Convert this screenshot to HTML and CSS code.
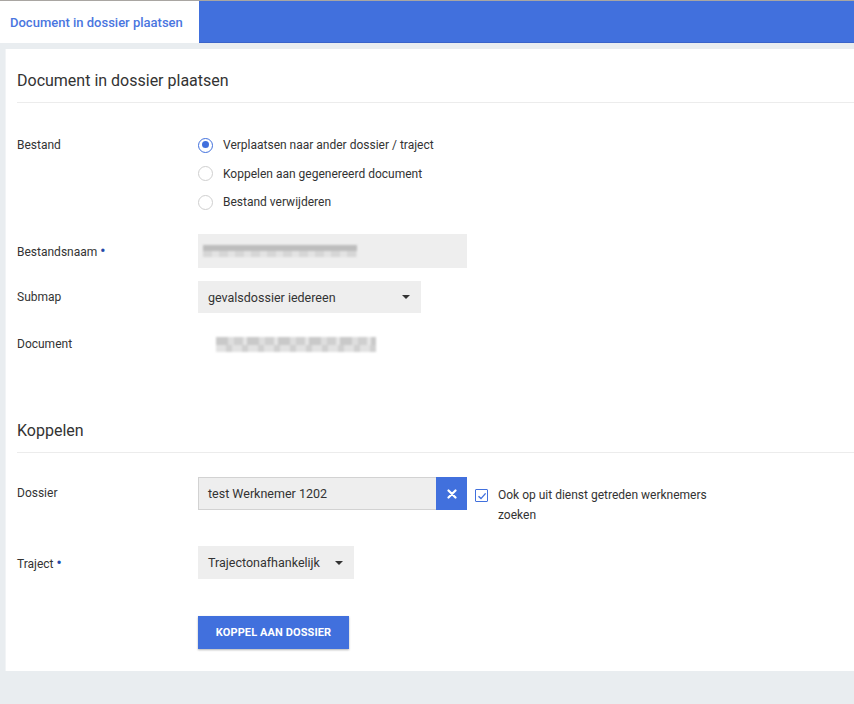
FILE: index.html
```html
<!DOCTYPE html>
<html lang="nl">
<head>
<meta charset="utf-8">
<title>Document in dossier plaatsen</title>
<link rel="stylesheet" href="styles.css">
</head>
<body>
<div class="topline"></div>
<nav class="tabbar">
  <div class="tab active">Document in dossier plaatsen</div>
  <div class="tabfill"></div>
</nav>
<main class="page">
  <section class="card">
    <h2 class="section-title">Document in dossier plaatsen</h2>

    <div class="row row-radios">
      <div class="label">Bestand</div>
      <div class="radios">
        <label class="radio"><span class="dot checked"></span><span>Verplaatsen naar ander dossier / traject</span></label>
        <label class="radio"><span class="dot"></span><span>Koppelen aan gegenereerd document</span></label>
        <label class="radio"><span class="dot"></span><span>Bestand verwijderen</span></label>
      </div>
    </div>

    <div class="row row-name">
      <div class="label">Bestandsnaam <span class="req">•</span></div>
      <div class="input input-name"><span class="blur blur-name" aria-hidden="true"></span></div>
    </div>

    <div class="row row-submap">
      <div class="label">Submap</div>
      <div class="select select-submap"><span>gevalsdossier iedereen</span><span class="caret"></span></div>
    </div>

    <div class="row row-doc">
      <div class="label">Document</div>
      <div class="docval"><span class="blur blur-doc" aria-hidden="true"></span></div>
    </div>

    <h2 class="section-title koppelen">Koppelen</h2>

    <div class="row row-dossier">
      <div class="label label-dossier">Dossier</div>
      <div class="dossier-input">test Werknemer 1202</div>
      <button class="clear" type="button">
        <svg width="10" height="10" viewBox="0 0 10 10"><path d="M1.5 1.5 L8.5 8.5 M8.5 1.5 L1.5 8.5" stroke="#fff" stroke-width="2.2" stroke-linecap="round"/></svg>
      </button>
      <label class="check">
        <span class="box"><svg width="10" height="10" viewBox="0 0 10 10"><path d="M1.5 5.2 L4 7.6 L8.6 2.4" fill="none" stroke="#4170dd" stroke-width="1.4"/></svg></span>
        <span class="check-text">Ook op uit dienst getreden werknemers zoeken</span>
      </label>
    </div>

    <div class="row row-traject">
      <div class="label">Traject <span class="req">•</span></div>
      <div class="select select-traject"><span>Trajectonafhankelijk</span><span class="caret"></span></div>
    </div>

    <div class="row row-btn">
      <div class="label"></div>
      <button class="primary" type="button">KOPPEL AAN DOSSIER</button>
    </div>
  </section>
</main>
</body>
</html>
```

FILE: styles.css
```css
* { box-sizing: border-box; }
html, body { margin: 0; padding: 0; }
body {
  width: 854px;
  height: 704px;
  overflow: hidden;
  background: #e9edf0;
  font-family: Roboto, "Liberation Sans", Arial, sans-serif;
  color: #333;
}
.topline { height: 1px; background: #a9a6a2; }
.tabbar { display: flex; height: 42px; background: #fff; }
.tab {
  width: 199px;
  padding-left: 10px;
  display: flex;
  align-items: center;
  font-size: 13px;
  font-weight: 500;
  color: #4a76e0;
  background: #fff;
}
.tabfill { flex: 1; background: #4170dd; border-bottom: 1px solid #3a63c9; }
.page { padding: 6px 0 0 5px; }
.card {
  background: #fff;
  padding: 0 0 22px 11px;
  border-left: 1px solid #f2f4f6;
}
.section-title {
  margin: 0;
  padding: 22px 0 11px;
  font-size: 16px;
  line-height: 20px;
  font-weight: 400;
  color: #333;
  border-bottom: 1px solid #ececec;
}
.section-title.koppelen { margin-top: 40px; }
.row { display: flex; align-items: center; }
.label {
  width: 181px;
  flex: none;
  font-size: 12px;
  color: #333;
}
.req { color: #2348a8; font-size: 14px; font-weight: 700; }
.row-radios { margin-top: 28px; align-items: flex-start; }
.row-radios .label { line-height: 28px; }
.radios { display: flex; flex-direction: column; }
.radio {
  display: flex;
  align-items: center;
  height: 28.5px;
  font-size: 12px;
  color: #333;
}
.dot {
  width: 15px;
  height: 15px;
  border-radius: 50%;
  border: 1.5px solid #cfcfcf;
  margin-right: 10px;
  flex: none;
  position: relative;
}
.dot.checked { border-color: #4170dd; }
.dot.checked::after {
  content: "";
  position: absolute;
  left: 2.5px; top: 2.5px;
  width: 7px; height: 7px;
  border-radius: 50%;
  background: #4170dd;
}
.row-name { margin-top: 17.5px; }
.input {
  width: 269px;
  height: 34px;
  background: #eeeeee;
  display: flex;
  align-items: center;
  padding-left: 5px;
}
.blur { display: block; filter: blur(1.2px); }
.blur-name {
  width: 154px;
  height: 12px;
  background:
    linear-gradient(#bdbdbd, #bdbdbd) 0 0 / 100% 6px no-repeat,
    repeating-linear-gradient(90deg, #d6d6d6 0 9px, #e3e3e3 9px 16px) 0 6px / 100% 6px no-repeat;
}
.row-submap { margin-top: 13px; }
.select {
  height: 32px;
  background: #eeeeee;
  display: flex;
  align-items: center;
  justify-content: space-between;
  padding: 0 11px 0 10px;
  font-size: 12.5px;
  color: #333;
}
.select-submap { width: 223px; }
.select-traject { width: 156px; height: 33px; }
.caret {
  width: 0; height: 0;
  border-left: 4px solid transparent;
  border-right: 4px solid transparent;
  border-top: 4px solid #333;
}
.row-doc { height: 32px; margin-top: 14px; }
.row-doc .label { padding-top: 2px; }
.docval { padding-left: 18px; padding-top: 2px; }
.blur-doc {
  width: 160px;
  height: 15px;
  background:
    repeating-linear-gradient(90deg, #c9c9c9 0 12px, #dedede 12px 18px, #cfcfcf 18px 27px, #e6e6e6 27px 31px) 0 0 / 100% 8px no-repeat,
    repeating-linear-gradient(90deg, #e2e2e2 0 10px, #d0d0d0 10px 16px) 0 8px / 100% 7px no-repeat;
}
.row-dossier { margin-top: 24px; align-items: flex-start; }
.label-dossier { line-height: 33px; }
.dossier-input {
  width: 238px;
  height: 33px;
  background: #eeeeee;
  border: 1px solid #d2d2d2;
  border-right: none;
  display: flex;
  align-items: center;
  padding-left: 9px;
  font-size: 12.5px;
  color: #333;
}
.clear {
  width: 31px;
  height: 33px;
  border: none;
  background: #4170dd;
  display: flex;
  align-items: center;
  justify-content: center;
  padding: 0;
}
.check {
  display: flex;
  align-items: flex-start;
  margin-left: 8px;
  margin-top: 8px;
}
.box {
  width: 13px;
  height: 13px;
  border: 1px solid #4170dd;
  border-radius: 1px;
  display: flex;
  align-items: center;
  justify-content: center;
  margin-top: 4px;
  flex: none;
}
.check-text {
  margin-left: 10px;
  width: 222px;
  font-size: 12px;
  line-height: 20px;
  color: #333;
}
.row-traject { margin-top: 21px; }
.row-btn { margin-top: 37px; }
.primary {
  width: 151px;
  height: 33px;
  border: none;
  background: #4170dd;
  color: #fff;
  font-family: Roboto, "Liberation Sans", Arial, sans-serif;
  font-size: 11px;
  font-weight: 700;
  letter-spacing: 0.1px;
  box-shadow: 0 1px 2px rgba(0,0,0,0.3);
  padding: 0;
}
```
